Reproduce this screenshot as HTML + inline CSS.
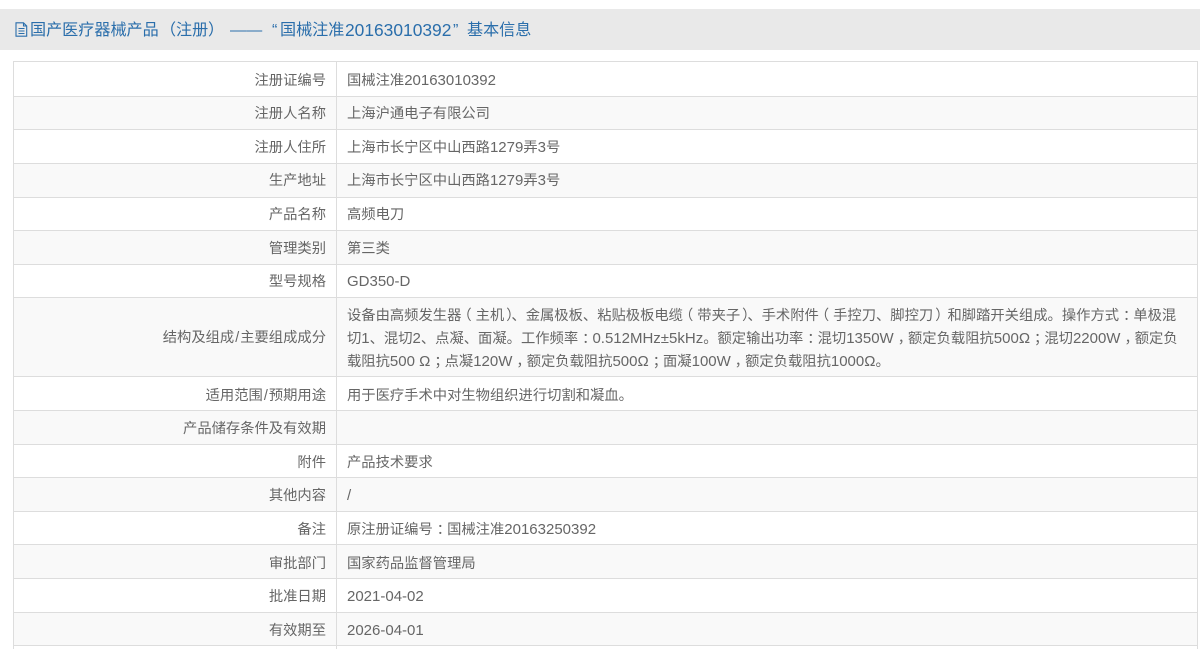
<!DOCTYPE html>
<html lang="zh"><head><meta charset="utf-8"><title>基本信息</title>
<style>
html,body{margin:0;padding:0;background:#fff}
body{width:1200px;height:649px;position:relative;overflow:hidden;font-family:"Liberation Sans","Noto Sans CJK SC",sans-serif;color:#666;font-size:14.3px;font-weight:400}
.head{position:absolute;left:0;top:9px;width:1200px;height:40.5px;background:#e9e9e9}
.title span{position:absolute;top:19px;line-height:22px;font-size:16.1px;color:#2a6eab;white-space:nowrap;filter:blur(.3px)}
.title span.n{font-size:17.4px}
.ic{position:absolute;left:15px;top:22px;filter:blur(.3px)}
.bg{position:absolute;left:14px;width:1183px;background:#f9f9f9}
.h{position:absolute;left:13px;width:1185px;height:1px;background:#ddd}
.v{position:absolute;top:61px;height:588px;width:1px;background:#ddd}
.k{position:absolute;right:874px;white-space:nowrap;line-height:20px;filter:blur(.3px)}
.t{position:absolute;left:347px;white-space:nowrap;line-height:20px;filter:blur(.3px)}
.l{font-size:15px}
.o{position:relative;left:-4px}
.c{position:relative;left:4px}
.d{position:relative;left:2px}
.s{margin:0 1px}
</style></head><body>
<div class="head"></div>
<svg class="ic" width="13" height="15" viewBox="0 0 13 15" fill="none" stroke="#2a6eab" stroke-width="1.1"><path d="M1 .8h7.500l3.200 3.200v10.200H1zM8.500 .8v3.200h3.200M3.500 6.500h6M3.500 9h6M3.500 11.500h6"/></svg>
<div class="title"><span style="left:30px">国产医疗器械产品</span><span style="left:160px">（</span><span style="left:176px">注册</span><span style="left:208px">）</span><span style="left:230px">——</span><span style="left:272px">“</span><span style="left:280px">国械注准</span><span class="n" style="left:345px">20163010392</span><span style="left:453px">”</span><span style="left:467px">基本信息</span></div>

<div class="bg" style="top:96px;height:34px"></div>
<div class="bg" style="top:163px;height:34px"></div>
<div class="bg" style="top:230px;height:34px"></div>
<div class="bg" style="top:297px;height:80px"></div>
<div class="bg" style="top:410px;height:34px"></div>
<div class="bg" style="top:477px;height:34px"></div>
<div class="bg" style="top:544px;height:34px"></div>
<div class="bg" style="top:612px;height:34px"></div>

<div class="h" style="top:61px"></div><div class="h" style="top:96px"></div><div class="h" style="top:129px"></div><div class="h" style="top:163px"></div><div class="h" style="top:197px"></div><div class="h" style="top:230px"></div><div class="h" style="top:264px"></div><div class="h" style="top:297px"></div><div class="h" style="top:376px"></div><div class="h" style="top:410px"></div><div class="h" style="top:444px"></div><div class="h" style="top:477px"></div><div class="h" style="top:511px"></div><div class="h" style="top:544px"></div><div class="h" style="top:578px"></div><div class="h" style="top:612px"></div><div class="h" style="top:645px"></div>
<div class="v" style="left:13px"></div><div class="v" style="left:336px"></div><div class="v" style="left:1197px"></div>

<div class="k" style="top:71px">注册证编号</div><div class="t" style="top:71px">国械注准<span class="l">20163010392</span></div>
<div class="k" style="top:104px">注册人名称</div><div class="t" style="top:104px">上海沪通电子有限公司</div>
<div class="k" style="top:138px">注册人住所</div><div class="t" style="top:138px">上海市长宁区中山西路<span class="l">1279</span>弄<span class="l">3</span>号</div>
<div class="k" style="top:171px">生产地址</div><div class="t" style="top:171px">上海市长宁区中山西路<span class="l">1279</span>弄<span class="l">3</span>号</div>
<div class="k" style="top:205px">产品名称</div><div class="t" style="top:205px">高频电刀</div>
<div class="k" style="top:239px">管理类别</div><div class="t" style="top:239px">第三类</div>
<div class="k" style="top:272px">型号规格</div><div class="t" style="top:272px"><span class="l">GD350-D</span></div>
<div class="k" style="top:328px">结构及组成<span class="s">/</span>主要组成成分</div>
<div class="t" style="top:306px">设备由高频发生器<span class="o">（</span>主机<span class="d">）</span>、金属极板、粘贴极板电缆<span class="o">（</span>带夹子<span class="d">）</span>、手术附件<span class="o">（</span>手控刀、脚控刀<span class="d">）</span>和脚踏开关组成。操作方式<span class="c">：</span>单极混</div>
<div class="t" style="top:329px">切<span class="l">1</span>、混切<span class="l">2</span>、点凝、面凝。工作频率<span class="c">：</span><span class="l">0.512MHz±5kHz</span>。额定输出功率<span class="c">：</span>混切<span class="l">1350W</span><span class="c">，</span>额定负载阻抗<span class="l">500Ω</span><span class="c">；</span>混切<span class="l">2200W</span><span class="c">，</span>额定负</div>
<div class="t" style="top:352px">载阻抗<span class="l">500 Ω</span><span class="c">；</span>点凝<span class="l">120W</span><span class="c">，</span>额定负载阻抗<span class="l">500Ω</span><span class="c">；</span>面凝<span class="l">100W</span><span class="c">，</span>额定负载阻抗<span class="l">1000Ω</span>。</div>
<div class="k" style="top:386px">适用范围<span class="s">/</span>预期用途</div><div class="t" style="top:386px">用于医疗手术中对生物组织进行切割和凝血。</div>
<div class="k" style="top:419px">产品储存条件及有效期</div>
<div class="k" style="top:453px">附件</div><div class="t" style="top:453px">产品技术要求</div>
<div class="k" style="top:486px">其他内容</div><div class="t" style="top:486px"><span class="l">/</span></div>
<div class="k" style="top:520px">备注</div><div class="t" style="top:520px">原注册证编号<span class="c">：</span>国械注准<span class="l">20163250392</span></div>
<div class="k" style="top:554px">审批部门</div><div class="t" style="top:554px">国家药品监督管理局</div>
<div class="k" style="top:587px">批准日期</div><div class="t" style="top:587px"><span class="l">2021-04-02</span></div>
<div class="k" style="top:621px">有效期至</div><div class="t" style="top:621px"><span class="l">2026-04-01</span></div>
</body></html>
